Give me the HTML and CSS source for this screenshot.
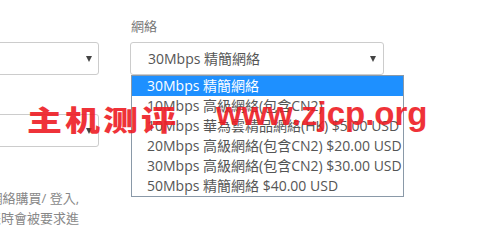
FILE: index.html
```html
<!DOCTYPE html>
<html lang="zh-Hant">
<head>
<meta charset="utf-8">
<link rel="stylesheet" href="styles.css">
</head>
<body>
<div class="form">
  <div class="col col-left">
    <div class="label">&nbsp;</div>
    <div class="select"><span class="arrow"></span></div>
    <div class="select select2"><span class="arrow"></span></div>
    <p class="note"><span class="line">於網絡購買/ 登入,</span><span class="line">結帳時會被要求進</span></p>
  </div>
  <div class="col col-right">
    <div class="label">網絡</div>
    <div class="select-wrap">
      <div class="select"><span class="value">30Mbps 精簡網絡</span><span class="arrow"></span></div>
      <ul class="dropdown">
        <li class="option selected">30Mbps 精簡網絡</li>
        <li class="option">10Mbps 高級網絡(包含CN2)</li>
        <li class="option">10Mbps 華為雲精品網絡(HK) $5.00 USD</li>
        <li class="option">20Mbps 高級網絡(包含CN2) $20.00 USD</li>
        <li class="option">30Mbps 高級網絡(包含CN2) $30.00 USD</li>
        <li class="option">50Mbps 精簡網絡 $40.00 USD</li>
      </ul>
    </div>
  </div>
</div>
<div class="watermark"><span class="wm-cjk">主机测评</span><span class="wm-latin">www.zjcp.org</span></div>
</body>
</html>
```

FILE: styles.css
```css
html, body {
  margin: 0;
  padding: 0;
  background: #fff;
  overflow: hidden;
}
body {
  width: 485px;
  height: 247px;
  position: relative;
  font-family: "Open Sans", "Noto Sans CJK TC", sans-serif;
  font-size: 14px;
  color: #555;
}
.form {
  display: flex;
  gap: 31px;
  padding-top: 16px;
}
.col-left {
  margin-left: -60px;
  width: 159px;
  flex: none;
}
.col-right {
  width: 254px;
  flex: none;
}
.label {
  height: 20px;
  line-height: 20px;
  font-size: 13px;
  color: #777;
  margin-bottom: 6px;
  padding-left: 1px;
}
.select {
  box-sizing: border-box;
  height: 33px;
  border: 1px solid #ccc;
  border-radius: 3px;
  display: flex;
  align-items: center;
  padding-left: 17px;
  position: relative;
  background: #fff;
}
.select .value {
  flex: 1;
  color: #555;
  line-height: 20px;
}
.arrow {
  position: absolute;
  right: 7px;
  top: 13px;
  width: 0;
  height: 0;
  border-left: 3.5px solid transparent;
  border-right: 3.5px solid transparent;
  border-top: 6px solid #444;
}
.col-left .arrow {
  right: 6px;
}
.select2 {
  margin-top: 39px;
}
.note {
  margin: 41px 20px 0 0;
  font-size: 13px;
  line-height: 20px;
  color: #888;
  text-align: right;
  white-space: nowrap;
}
.note .line {
  display: block;
}
.select-wrap {
  position: relative;
}
.dropdown {
  position: absolute;
  top: 100%;
  left: 1px;
  width: 273px;
  box-sizing: border-box;
  margin: 0;
  padding: 0;
  list-style: none;
  border: 1px solid #8a99a8;
  background: #fff;
  z-index: 2;
}
.option {
  height: 20px;
  line-height: 20px;
  padding-left: 15px;
  white-space: nowrap;
  color: #555;
}
.option.selected {
  background: #1e90ff;
  color: #fff;
}
.watermark {
  position: absolute;
  left: 27px;
  top: 104px;
  z-index: 3;
  display: flex;
  align-items: flex-start;
  white-space: nowrap;
  color: rgb(238, 28, 36);
  opacity: 0.9;
  font-weight: bold;
}
.wm-cjk {
  display: block;
  font-family: "Noto Sans CJK SC", sans-serif;
  font-size: 35px;
  line-height: 35px;
  font-weight: 900;
  letter-spacing: 3px;
  transform: scaleY(0.82);
  transform-origin: 0 0;
}
.wm-latin {
  font-family: "Liberation Sans", Arial, sans-serif;
  font-size: 33px;
  line-height: 33px;
  margin-left: 37px;
  margin-top: -7px;
}
```
